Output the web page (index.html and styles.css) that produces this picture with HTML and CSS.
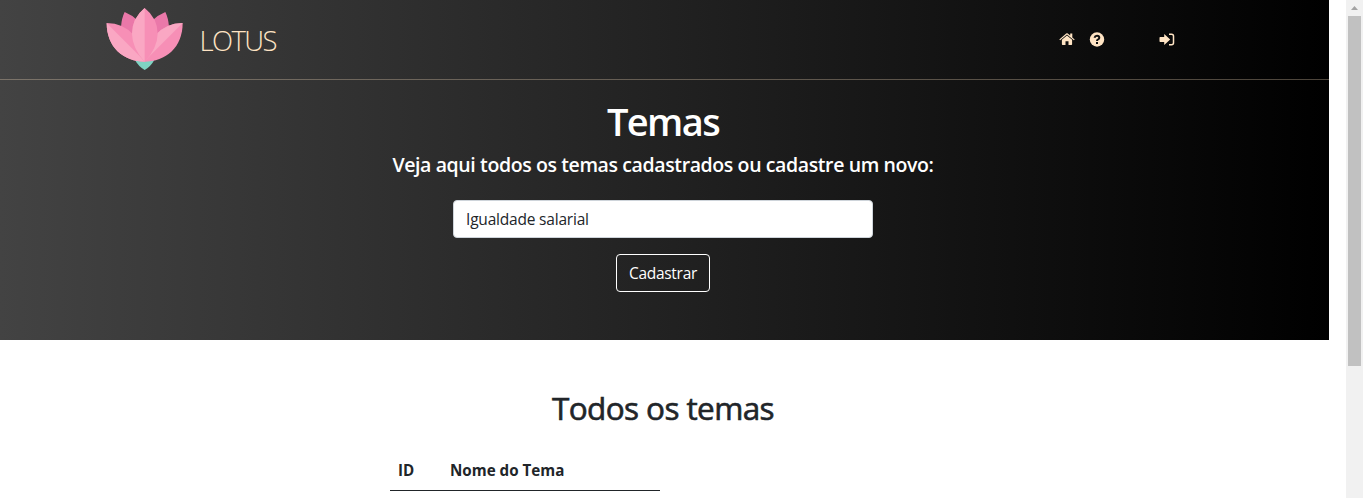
FILE: index.html
```html
<!DOCTYPE html>
<html lang="pt-BR">
<head>
<meta charset="utf-8">
<title>Lotus</title>
<link rel="stylesheet" href="styles.css">
</head>
<body>
<div class="page">
  <div class="hero">
    <header class="navbar">
      <a class="brand">
        <svg class="logo" viewBox="0 0 246 210">
          <path fill="#7fd3c3" d="M93 168h58q-11 20-29 30-18-10-29-30z"/>
          <path fill="#ea78a9" d="M62 24q22 9 40 26v60L51 68q2-26 11-44zM184 24q-22 9-40 26v60l51-42q-2-26-11-44z"/>
          <path fill="#f78fb6" d="M8 57q50 0 84 38l32 78C58 173 8 130 8 57z"/>
          <path fill="#faa7c3" d="M8 57l116 116C58 173 8 130 8 57z"/>
          <path fill="#f78fb6" d="M236 57q-50 0-84 38l-32 78c66 0 116-43 116-116z"/>
          <path fill="#faa7c3" d="M236 57q-50 0-84 38l-32 78z"/>
          <path fill="#f78fb6" d="M122 12q39 31 39 77-1 44-39 84-38-40-38-84 0-46 38-77z"/>
          <path fill="#faa7c3" d="M122 12Q84 43 84 89q1 44 38 84z"/>
        </svg>
        <span class="brand-name">LOTUS</span>
      </a>
      <nav class="links">
        <svg class="icon home" viewBox="0 0 16 16"><path d="M8 4.400l5.100 4.300v4.600q0 .7-.7.7H9.500v-3.800h-3V14H3.600q-.7 0-.7-.7V8.700z"/><path d="M11.200 2.500h2.100v3.900l2.400 2-.8.900L8 3.500 1.100 9.300l-.8-.9 6.900-5.800q.8-.6 1.600 0l2.400 2z"/></svg>
        <svg class="icon help" viewBox="0 0 16 16"><circle cx="8" cy="8.500" r="7.200"/><path class="mark" d="M5.500 6.700Q6 4.800 8 4.800q2.300 0 2.300 1.900 0 1.100-1.200 1.700Q8 8.900 8 10M8 11v2"/></svg>
        <svg class="icon login" viewBox="0 0 16 16"><path d="M1.200 6h4V3l6 5.500-6 5.500v-3h-4q-.7 0-.7-.7V6.700q0-.7.7-.7z"/><path class="door" d="M10 3.200h2.500q2 0 2 2v6.600q0 2-2 2H10"/></svg>
      </nav>
    </header>
    <main class="intro">
      <h1>Temas</h1>
      <h5>Veja aqui todos os temas cadastrados ou cadastre um novo:</h5>
      <form class="form">
        <input class="field" type="text" value="Igualdade salarial">
        <button class="submit" type="button">Cadastrar</button>
      </form>
    </main>
  </div>
  <section class="list">
    <h2>Todos os temas</h2>
    <table>
      <thead><tr><th class="id">ID</th><th>Nome do Tema</th></tr></thead>
    </table>
  </section>
</div>
<div class="scrollbar"><svg viewBox="0 0 17 16"><path d="M5 10h7L8.500 6z"/></svg><div class="thumb"></div></div>
</body>
</html>
```
FILE: styles.css
```css
* { box-sizing: border-box; }
body {
  margin: 0;
  height: 498px;
  display: flex;
  overflow: hidden;
  background: #fff;
  color: #212529;
  font: 16px/24px "Open Sans", "Noto Sans", sans-serif;
}
h1, h2, h5 { margin: 0; white-space: nowrap; text-align: center; }
.page { width: 1346px; flex: none; }
.hero {
  width: 1329px;
  height: 340px;
  color: #fff;
  background: linear-gradient(to right, #434343, #000);
}
.navbar {
  height: 80px;
  padding: 4px 154.5px 0 104px;
  display: flex;
  justify-content: space-between;
  border-bottom: 1px solid rgba(255, 228, 196, .3);
}
.brand { display: flex; }
.logo { width: 82px; height: 70px; }
.brand-name {
  margin-left: 13.5px;
  padding-top: 17px;
  color: #ffe4c4;
  font-size: 27.500px;
  line-height: 40px;
  font-weight: 300;
  letter-spacing: -1.6px;
}
.links { display: flex; padding-top: 27px; }
.icon { width: 16px; height: 16px; fill: #ffe4c4; }
.help { margin-left: 14px; }
.login { margin-left: 54px; }
.mark { fill: none; stroke: #111; stroke-width: 2; }
.door { fill: none; stroke: #ffe4c4; stroke-width: 1.5; }
.intro { padding: 17px 3px 0 0; }
h1 { font-size: 38px; line-height: 48px; font-weight: 600; letter-spacing: -1.6px; }
h5 { margin-top: 8px; font-size: 19.500px; line-height: 24px; font-weight: 600; letter-spacing: -.39px; }
.form {
  margin-top: 23px;
  display: flex;
  flex-direction: column;
  align-items: center;
  gap: 16px;
}
.field, .submit {
  height: 38px;
  border: 1px solid #ced4da;
  border-radius: 4px;
  padding: 6px 12px;
  font: inherit;
  font-size: 15.500px;
}
.field { width: 420px; color: #212529; background: #fff; letter-spacing: -.2px; }
.submit { width: 94px; padding: 0; color: #fff; border-color: #fff; background: transparent; letter-spacing: -.3px; }
.list { padding-top: 49px; width: 1326px; }
h2 {
  font-size: 31.500px;
  line-height: 38px;
  font-weight: 400;
  letter-spacing: -.6px;
  -webkit-text-stroke: .6px #212529;
}
table { width: 270px; margin: 23px 0 0 390px; border-collapse: collapse; }
th {
  height: 40px;
  padding: 0 8px;
  text-align: left;
  font-size: 15.200px;
  font-weight: 700;
  border-bottom: 1px solid #212529;
}
.id { width: 52px; }
.scrollbar { width: 17px; height: 498px; flex: none; background: #f1f1f1; }
.scrollbar svg { display: block; width: 17px; height: 16px; fill: #a3a3a3; }
.thumb { width: 13px; height: 350px; margin-left: 2px; background: #c1c1c1; }
```
